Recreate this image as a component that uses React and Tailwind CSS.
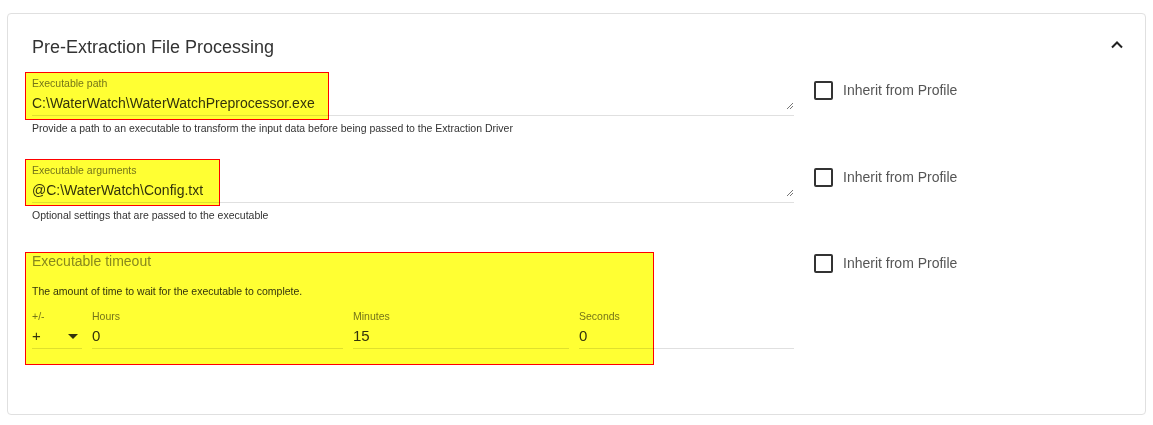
function Highlight({ className }) {
  return (
    <div
      className={`pointer-events-none absolute border border-[#ff0000] bg-[#ffff33] mix-blend-multiply ${className}`}
    />
  );
}

function Inherit() {
  return (
    <label className="flex items-center gap-[10px] text-[14px] text-[#555]">
      <span className="h-[19px] w-[19px] rounded-[2px] border-2 border-[#333]" />
      Inherit from Profile
    </label>
  );
}

function ResizeGrip() {
  return (
    <svg width="8" height="8" viewBox="0 0 8 8" className="mb-[2px]">
      <path d="M7 1 L1 7 M7 4 L4 7" stroke="#777" strokeWidth="1" />
    </svg>
  );
}

function TextField({ label, value, helper }) {
  return (
    <div>
      <div className="border-b border-[#e0e0e0] pb-[3px]">
        <div className="text-[10.5px] leading-[14px] text-[#757575]">{label}</div>
        <div className="mt-[4px] flex items-end justify-between text-[14px] leading-[18px] text-[#333]">
          <span>{value}</span>
          <ResizeGrip />
        </div>
      </div>
      <div className="mt-[5px] text-[10.5px] leading-[14px] text-[#333]">{helper}</div>
    </div>
  );
}

function SmallField({ label, value, width, select }) {
  return (
    <div className={width}>
      <div className="text-[10.5px] leading-[14px] text-[#757575]">{label}</div>
      <div className="mt-[4px] flex items-center justify-between border-b border-[#e0e0e0] pb-[3px] text-[15px] leading-[18px] text-[#333]">
        <span>{value}</span>
        {select && (
          <svg width="10" height="5" viewBox="0 0 10 5" className="mr-[4px]">
            <path d="M0 0 L10 0 L5 5 Z" fill="#333" />
          </svg>
        )}
      </div>
    </div>
  );
}

export default function App() {
  return (
    <div className="min-h-[425px] bg-white px-[7px] pt-[13px] font-['Liberation_Sans',Arial,sans-serif]">
      <div className="h-[402px] rounded-[4px] border border-[#e0e0e0] px-[24px] pt-[22px]">
        <div className="flex justify-between">
          <h2 className="text-[18px] leading-[22px] text-[#333]">Pre-Extraction File Processing</h2>
          <svg width="12" height="8" viewBox="0 0 12 8" className="mt-[5px] -mr-[2px]">
            <path d="M1 6.5 L6 1.5 L11 6.5" stroke="#222" strokeWidth="2" fill="none" />
          </svg>
        </div>

        <div className="mt-[18px] flex">
          <div className="relative w-[762px]">
            <Highlight className="-left-[7px] -top-[4px] h-[48px] w-[304px]" />
            <TextField
              label="Executable path"
              value="C:\WaterWatch\WaterWatchPreprocessor.exe"
              helper="Provide a path to an executable to transform the input data before being passed to the Extraction Driver"
            />
          </div>
          <div className="ml-[20px] pt-[4px]">
            <Inherit />
          </div>
        </div>

        <div className="mt-[28px] flex">
          <div className="relative w-[762px]">
            <Highlight className="-left-[7px] -top-[4px] h-[47px] w-[195px]" />
            <TextField
              label="Executable arguments"
              value="@C:\WaterWatch\Config.txt"
              helper="Optional settings that are passed to the executable"
            />
          </div>
          <div className="ml-[20px] pt-[4px]">
            <Inherit />
          </div>
        </div>

        <div className="mt-[30px] flex">
          <div className="relative w-[762px]">
            <Highlight className="-left-[7px] top-0 h-[113px] w-[629px]" />
            <div className="text-[14px] leading-[18px] text-[#888]">Executable timeout</div>
            <div className="mt-[14px] text-[10.5px] leading-[14px] text-[#333]">
              The amount of time to wait for the executable to complete.
            </div>
            <div className="mt-[11px] flex gap-[10px]">
              <SmallField label="+/-" value="+" width="w-[50px]" select />
              <SmallField label="Hours" value="0" width="w-[251px]" />
              <SmallField label="Minutes" value="15" width="w-[216px]" />
              <SmallField label="Seconds" value="0" width="w-[215px]" />
            </div>
          </div>
          <div className="ml-[20px] pt-[1px]">
            <Inherit />
          </div>
        </div>
      </div>
    </div>
  );
}
